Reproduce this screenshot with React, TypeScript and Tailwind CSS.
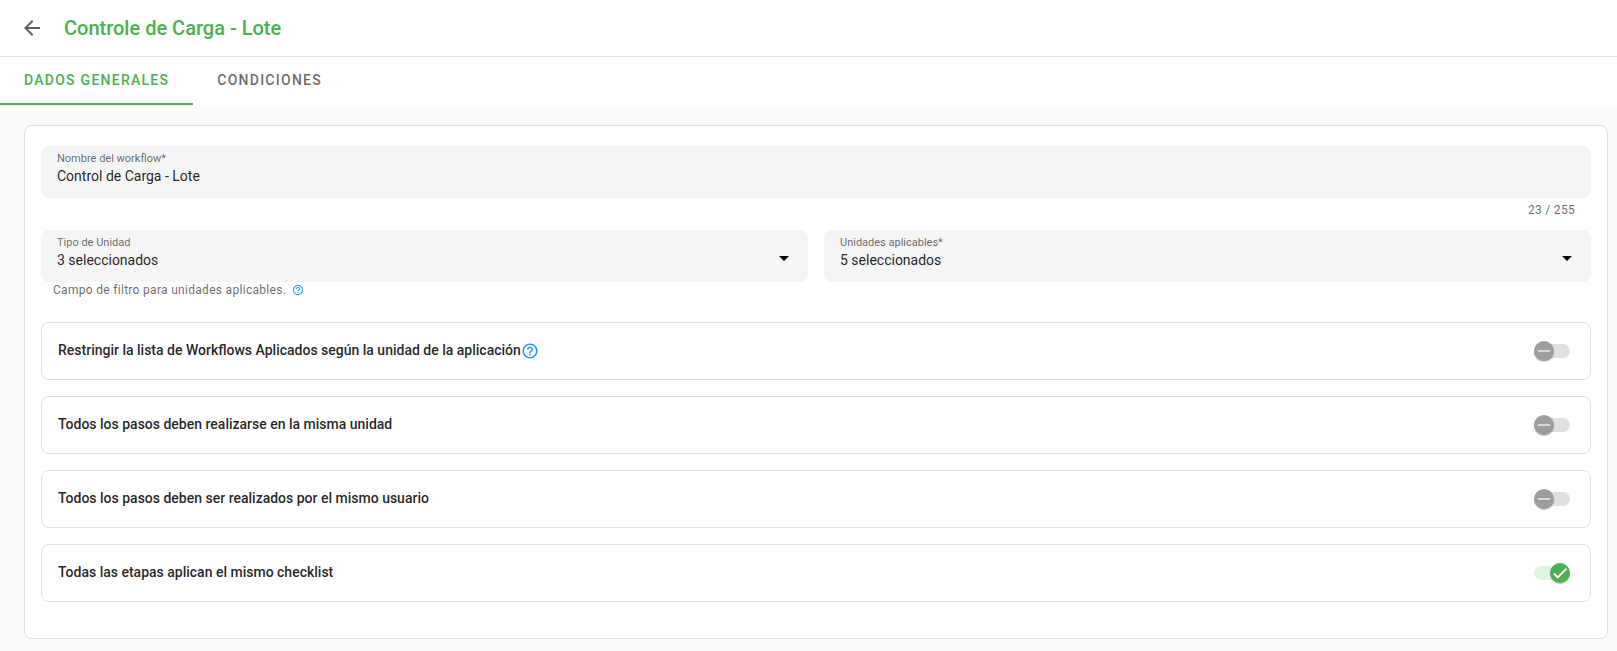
import { useId, useState } from "react";
import { MdArrowBack, MdHelpOutline } from "react-icons/md";

const tabs = ["Dados generales", "Condiciones"];

const settings = [
  { id: "restrict", label: "Restringir la lista de Workflows Aplicados según la unidad de la aplicación", help: true, enabled: false },
  { id: "same-unit", label: "Todos los pasos deben realizarse en la misma unidad", help: false, enabled: false },
  { id: "same-user", label: "Todos los pasos deben ser realizados por el mismo usuario", help: false, enabled: false },
  { id: "same-checklist", label: "Todas las etapas aplican el mismo checklist", help: false, enabled: true },
];

function SelectField({ label, value }: { label: string; value: string }) {
  const id = useId();

  return (
    <div className="relative h-13 rounded-lg bg-[#f5f5f5]">
      <label htmlFor={id} className="pointer-events-none absolute left-4 top-[5px] text-[11px] leading-4 text-black/60">
        {label}
      </label>
      <select
        id={id}
        className="h-full w-full appearance-none rounded-lg bg-transparent pb-1 pl-4 pr-12 pt-3 text-sm text-black/87 outline-none"
      >
        <option>{value}</option>
      </select>
      <svg viewBox="0 0 10 5" className="pointer-events-none absolute right-[19px] top-1/2 h-[5px] w-[10px]" aria-hidden="true">
        <path d="M0 0h10L5 5z" />
      </svg>
    </div>
  );
}

function Switch({ id, defaultChecked }: { id: string; defaultChecked: boolean }) {
  return (
    <span className="relative flex h-5 w-9 shrink-0 items-center">
      <input
        id={id}
        type="checkbox"
        role="switch"
        defaultChecked={defaultChecked}
        className="peer h-3.5 w-9 cursor-pointer appearance-none rounded-full bg-[#e0e0e0] checked:bg-[#e1f4e2]"
      />
      <span className="pointer-events-none absolute left-0 top-0 flex h-5 w-5 items-center justify-center rounded-full bg-[#9e9e9e] shadow-[0_1px_1px_rgba(0,0,0,0.25)] peer-checked:left-4 peer-checked:bg-[#4caf50] peer-checked:[&_.off]:hidden peer-checked:[&_.on]:block">
        <svg viewBox="0 0 24 24" className="off h-[18px] w-[18px] fill-[#eeeeee]" aria-hidden="true">
          <path d="M20 13H4v-2h16v2z" />
        </svg>
        <svg viewBox="0 0 24 24" className="on hidden h-[18px] w-[18px] fill-white" aria-hidden="true">
          <path d="M19.69 5.23L8.96 15.96l-4.23-4.23L2.96 13.5l6 6L21.46 7z" />
        </svg>
      </span>
    </span>
  );
}

export default function App() {
  const [active, setActive] = useState(tabs[0]);
  const [name, setName] = useState("Control de Carga - Lote");

  return (
    <div className="min-h-screen bg-[#fafafa] font-['Roboto',sans-serif] text-black/87">
      <header className="flex h-[57px] items-center gap-5 border-b border-[#e0e0e0] bg-white px-5">
        <button type="button" aria-label="Volver" className="text-[#616161]">
          <MdArrowBack className="h-6 w-6" />
        </button>
        <h1 className="text-xl font-medium text-[#4caf50]">Controle de Carga - Lote</h1>
      </header>

      <nav role="tablist" className="flex h-12 bg-white">
        {tabs.map((tab) => (
          <button
            key={tab}
            type="button"
            role="tab"
            aria-selected={active === tab}
            onClick={() => setActive(tab)}
            className={`border-b-2 px-6 text-sm font-medium uppercase tracking-[0.09em] ${
              active === tab ? "border-[#4caf50] text-[#4caf50]" : "border-transparent text-black/60"
            }`}
          >
            {tab}
          </button>
        ))}
      </nav>

      <main className="pb-3 pl-6 pr-[9px] pt-5">
        <form className="rounded-lg border border-[#e0e0e0] bg-white px-4 pb-9 pt-5">
          <div className="relative h-13 rounded-lg bg-[#f5f5f5]">
            <label htmlFor="name" className="pointer-events-none absolute left-4 top-[5px] text-[11px] leading-4 text-black/60">
              Nombre del workflow*
            </label>
            <input
              id="name"
              type="text"
              maxLength={255}
              value={name}
              onChange={(event) => setName(event.target.value)}
              className="h-full w-full rounded-lg bg-transparent px-4 pb-1 pt-3 text-sm outline-none"
            />
          </div>
          <p className="px-4 pb-3 pt-1 text-right text-xs tracking-wide text-black/60">{name.length} / 255</p>

          <div className="grid grid-cols-2 gap-4">
            <div>
              <SelectField label="Tipo de Unidad" value="3 seleccionados" />
              <p className="flex items-center gap-1.5 px-3 text-xs tracking-wide text-black/60">
                Campo de filtro para unidades aplicables.
                <MdHelpOutline className="h-3 w-3 text-[#2196f3]" />
              </p>
            </div>
            <SelectField label="Unidades aplicables*" value="5 seleccionados" />
          </div>

          <div className="mt-6 flex flex-col gap-4">
            {settings.map((setting) => (
              <div key={setting.id} className="flex h-[58px] items-center justify-between rounded-lg border border-[#e0e0e0] pl-4 pr-5">
                <div className="flex items-center">
                  <label htmlFor={setting.id} className="pb-0.5 text-sm font-medium">
                    {setting.label}
                  </label>
                  {setting.help && <MdHelpOutline className="h-[18px] w-[18px] text-[#2196f3]" />}
                </div>
                <Switch id={setting.id} defaultChecked={setting.enabled} />
              </div>
            ))}
          </div>
        </form>
      </main>
    </div>
  );
}
